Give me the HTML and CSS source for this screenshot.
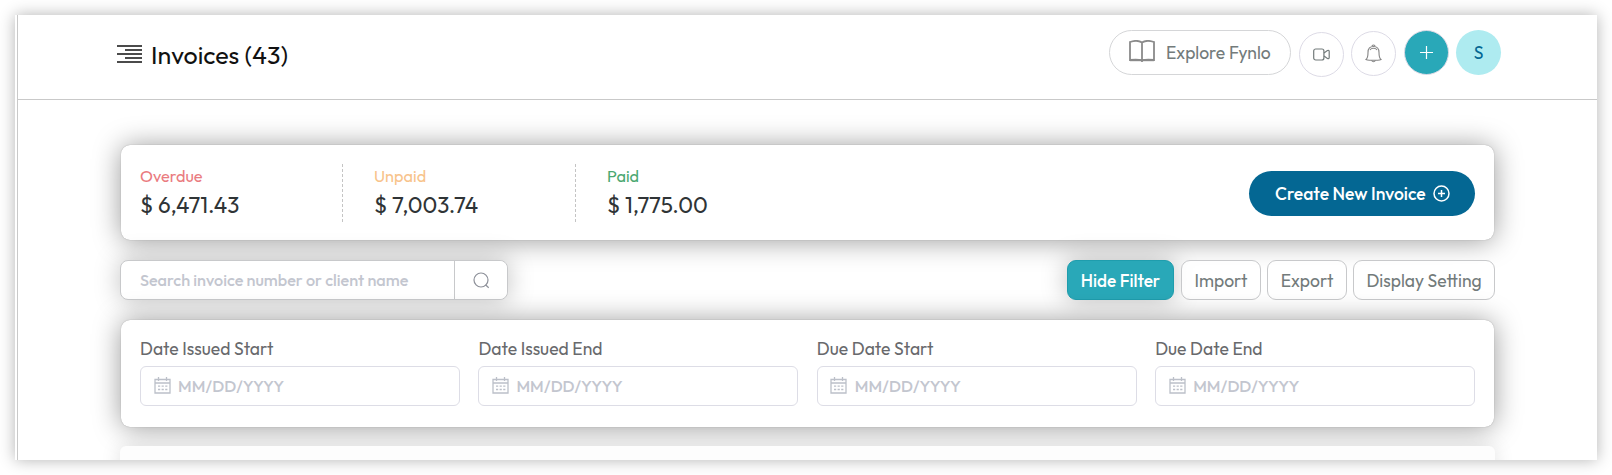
FILE: index.html
```html
<!DOCTYPE html>
<html lang="en">
<head>
    <meta charset="UTF-8">
    <meta name="viewport" content="width=device-width, initial-scale=1.0">
    <title>Invoices</title>
    <link rel="stylesheet" href="styles.css">
</head>
<body>
    <div class="window">
        <div class="page">
            <header class="header">
                <svg class="menu-icon" width="25" height="18" viewBox="0 0 25 18" stroke="#111" stroke-width="1.7">
                    <path d="M0 1h25M8 5h17M0 9h25M8 13h17M0 17h25"/>
                </svg>
                <h1>Invoices (43)</h1>
                <div class="header-actions">
                    <button class="explore">
                        <svg width="26" height="22" viewBox="0 0 26 22" fill="none" stroke="#8a8a8a" stroke-width="1.8">
                            <path d="M13 2.500C10 .6 5 .6 1 2v18c4-.5 9-.5 12 .4 3-.9 8-.9 12-.4V2C21 .6 16 .6 13 2.500zM13 2.500V22"/>
                            <path d="M1 20.200h24" stroke-width="2"/>
                        </svg>
                        <span>Explore Fynlo</span>
                    </button>
                    <button class="round video">
                        <svg width="17" height="13" viewBox="0 0 17 13" fill="none" stroke="#737b7b" stroke-width="1.2">
                            <rect x=".7" y="1" width="10.2" height="11" rx="2"/>
                            <path d="M11 5l3.4-2.500q1.800-.6 1.800 1v6q0 1.600-1.800 1L11 8"/>
                        </svg>
                    </button>
                    <button class="round bell">
                        <svg width="17" height="19" viewBox="0 0 17 19" fill="none" stroke="#858585" stroke-width="1.1">
                            <path d="M1 15.500c2-1.500 2-3 2-7C3 4.500 5 2.500 8.500 2.500S14 4.500 14 8.500c0 4 0 5.500 2 7-1.500 1-3 .6-5 .8H6C4 16.100 2.500 16.500 1 15.500z"/>
                            <path d="M7 2.300q0-1.300 1.500-1.300T10 2.300M5 6q1-1.700 3.500-1.700T12 6M6.500 16.500q2 2.500 4 0"/>
                        </svg>
                    </button>
                    <button class="round add">
                        <svg width="13" height="13" viewBox="0 0 13 13" stroke="#fff" stroke-width="1.200">
                            <path d="M6.500 0v13M0 6.500h13"/>
                        </svg>
                    </button>
                    <div class="round avatar">S</div>
                </div>
            </header>

            <main class="content">
                <section class="card summary">
                    <div class="stat">
                        <div class="label overdue">Overdue</div>
                        <div class="amount">$ 6,471.43</div>
                    </div>
                    <div class="stat">
                        <div class="label unpaid">Unpaid</div>
                        <div class="amount">$ 7,003.74</div>
                    </div>
                    <div class="stat">
                        <div class="label paid">Paid</div>
                        <div class="amount">$ 1,775.00</div>
                    </div>
                    <button class="create">
                        <span>Create New Invoice</span>
                        <svg width="17" height="17" viewBox="0 0 17 17" fill="none" stroke="#fff" stroke-width="1.500">
                            <circle cx="8.500" cy="8.500" r="7.500"/>
                            <path d="M8.500 5v7M5 8.500h7"/>
                        </svg>
                    </button>
                </section>

                <div class="toolbar">
                    <div class="search">
                        <div class="search-input"><span>Search invoice number or client name</span></div>
                        <button class="search-btn">
                            <svg width="17" height="17" viewBox="0 0 17 17" fill="none" stroke="#8d9099" stroke-width="1.200">
                                <circle cx="8" cy="8" r="7"/>
                                <path d="M12.500 12.800l3.200 3"/>
                            </svg>
                        </button>
                    </div>
                    <div class="tools">
                        <button class="tool active">Hide Filter</button>
                        <button class="tool">Import</button>
                        <button class="tool">Export</button>
                        <button class="tool display">Display Setting</button>
                    </div>
                </div>

                <svg class="symbols" width="0" height="0">
                    <symbol id="calendar" viewBox="0 0 17 17">
                        <path d="M1 2.500h15v13.500H1zM1 6h15M4.500 0v4M12.500 0v4" fill="none" stroke="#bcc0c9" stroke-width="1.300"/>
                        <path d="M4 9.200h9.500M4 12.500h9.500" fill="none" stroke="#bcc0c9" stroke-width="1.300" stroke-dasharray="2.200 1.400"/>
                    </symbol>
                </svg>

                <section class="card filters">
                    <div class="field">
                        <label>Date Issued Start</label>
                        <div class="date"><svg width="17" height="17"><use href="#calendar"/></svg><span>MM/DD/YYYY</span></div>
                    </div>
                    <div class="field">
                        <label>Date Issued End</label>
                        <div class="date"><svg width="17" height="17"><use href="#calendar"/></svg><span>MM/DD/YYYY</span></div>
                    </div>
                    <div class="field">
                        <label>Due Date Start</label>
                        <div class="date"><svg width="17" height="17"><use href="#calendar"/></svg><span>MM/DD/YYYY</span></div>
                    </div>
                    <div class="field">
                        <label>Due Date End</label>
                        <div class="date"><svg width="17" height="17"><use href="#calendar"/></svg><span>MM/DD/YYYY</span></div>
                    </div>
                </section>

                <div class="table-top"></div>
            </main>
        </div>
    </div>
</body>
</html>
```
FILE: styles.css
```css
* {
    box-sizing: border-box;
}
body {
    margin: 0;
    padding: 15px;
    height: 475px;
    overflow: hidden;
    background: white;
    font-family: Outfit, Lato, sans-serif;
}
button {
    font-family: inherit;
    padding: 0;
    background: white;
    white-space: nowrap;
}
.window {
    width: 1582px;
    height: 445px;
    padding-left: 2px;
    background: white;
    box-shadow: 0 0 15px rgba(0,0,0,0.3);
}
.page {
    height: 445px;
    border-left: 1px solid #c9c9c9;
    overflow: hidden;
}

/* header */
.header {
    display: flex;
    align-items: flex-start;
    height: 85px;
    padding: 15px 96px 0 98px;
    border-bottom: 1px solid #c9c9c9;
}
.menu-icon {
    margin: 15px 0 0 0.5px;
}
h1 {
    margin: 10px 0 0 9.5px;
    font-size: 25px;
    font-weight: 400;
    line-height: 30px;
    color: #111;
}
.header-actions {
    display: flex;
    align-items: flex-start;
    margin-left: auto;
}
.explore {
    display: flex;
    align-items: center;
    width: 182px;
    height: 45px;
    padding-left: 19px;
    border: 1px solid #d5d6d8;
    border-radius: 23px;
    color: #737b7b;
    font-size: 17.5px;
}
.explore svg {
    margin-top: -3px;
}
.explore span {
    margin-left: 11px;
}
.round {
    display: flex;
    align-items: center;
    justify-content: center;
    width: 45px;
    height: 45px;
    border: 1px solid #dddbe6;
    border-radius: 50%;
}
.video {
    margin: 2px 0 0 8px;
}
.bell {
    margin: 1px 0 0 7px;
}
.add {
    width: 45px;
    height: 45px;
    margin: 0 0 0 8px;
    background: #29a8b8;
}
.avatar {
    margin-left: 7px;
    border: none;
    background: #aeebf0;
    color: #046793;
    font-size: 17.5px;
}

/* content */
.content {
    padding: 45px 102px 0 103px;
}
.card {
    display: flex;
    margin-right: 1px;
    background: white;
    border-radius: 9px;
    box-shadow: 0 0 1px rgba(0,0,0,0.35), 0 1px 28px rgba(0,0,0,0.4);
}
.summary {
    height: 95px;
    padding: 19px 19px 0 19px;
}
.stat {
    width: 202px;
    height: 58px;
    padding-top: 1px;
    white-space: nowrap;
}
.stat + .stat {
    width: 233px;
    padding-left: 31px;
    border-left: 1px dashed #c4c4c4;
}
.label {
    height: 22px;
    font-size: 16.3px;
    line-height: 22px;
}
.overdue {
    color: #ea7b80;
}
.unpaid {
    color: #f8c38b;
}
.paid {
    color: #4ba871;
}
.amount {
    margin-top: 3px;
    font-size: 22.5px;
    line-height: 30px;
    color: #2f3436;
}
.create {
    display: flex;
    align-items: center;
    width: 226px;
    height: 45px;
    margin: 7px 0 0 auto;
    padding-left: 26px;
    border: none;
    border-radius: 23px;
    background: #046793;
    color: white;
    font-size: 17.5px;
    font-weight: 500;
}
.create svg {
    margin: -1px 0 0 7px;
}

/* search and actions */
.toolbar {
    display: flex;
    justify-content: space-between;
    height: 40px;
    margin: 20px 0 20px -1px;
}
.search {
    display: flex;
    width: 388px;
    border: 1px solid #c8c9cb;
    border-radius: 8px;
    background: white;
    box-shadow: 0 0 26px rgba(0,0,0,0.25);
}
.search-input {
    display: flex;
    align-items: center;
    width: 334px;
    padding-left: 19px;
    border-right: 1px solid #c8c9cb;
    color: #c3c6cf;
    font-size: 16.2px;
    font-weight: 500;
    white-space: nowrap;
}
.search-btn {
    flex: 1;
    border: none;
    border-radius: 0 8px 8px 0;
}
.search-btn svg {
    display: block;
    margin: 0 auto;
}
.tools {
    display: flex;
    gap: 6px;
}
.tool {
    width: 80px;
    height: 40px;
    border: 1px solid #c8c9cb;
    border-radius: 9px;
    background: rgba(255,255,255,0.8);
    color: #737b7b;
    font-size: 17.5px;
}
.active {
    width: 107px;
    margin-right: 1px;
    border-color: #1f9dad;
    background: #29a8b8;
    color: white;
    font-weight: 500;
    font-size: 17.2px;
    box-shadow: 0 0 26px rgba(0,0,0,0.25);
}
.display {
    width: 142px;
}

/* filters */
.symbols {
    display: block;
}
.filters {
    position: relative;
    z-index: 1;
    gap: 18.5px;
    height: 107px;
    padding: 18px 19px 0 19px;
}
.field {
    flex: 1;
}
.field label {
    display: block;
    height: 28px;
    font-size: 17.5px;
    line-height: 22px;
    color: #68696c;
}
.date {
    display: flex;
    align-items: center;
    height: 40px;
    padding-left: 12.5px;
    border: 1px solid #dddde6;
    border-radius: 6px;
    color: #c3c6cf;
    font-size: 16.2px;
    font-weight: 500;
}
.date svg {
    margin-right: 7.5px;
    margin-top: -2px;
}
.table-top {
    position: relative;
    z-index: 2;
    height: 40px;
    margin: 19px 0 0 -1px;
    border-radius: 6px 6px 0 0;
    background: #fdfdfd;
    box-shadow: 0 0 20px rgba(0,0,0,0.12);
}
```
